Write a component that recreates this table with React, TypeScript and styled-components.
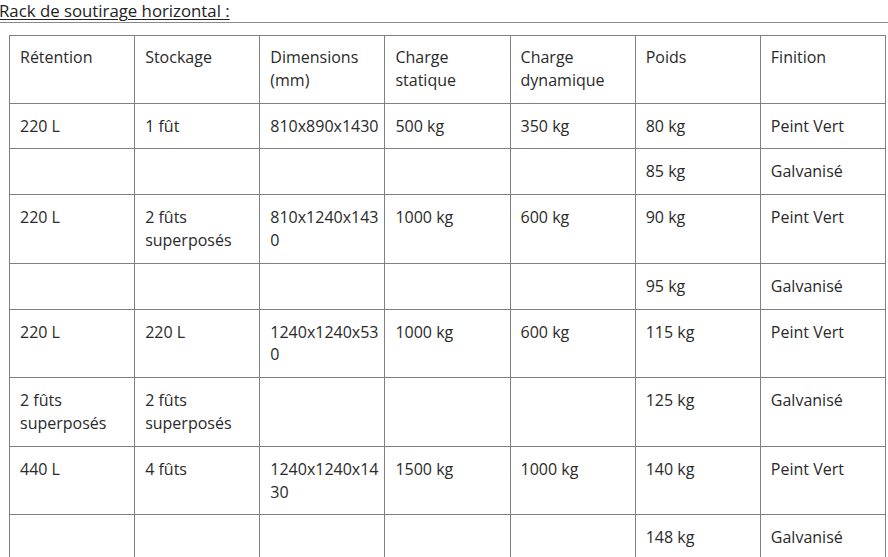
import React from "react";
import styled, { createGlobalStyle } from "styled-components";

const GlobalStyle = createGlobalStyle`
  html, body {
    margin: 0;
    padding: 0;
    background: #fff;
    overflow: hidden;
  }
  body {
    font-family: "Open Sans", "Liberation Sans", sans-serif;
    color: #2a2a2a;
  }
`;

const Page = styled.div`
  display: flex;
  flex-direction: column;
  width: 888px;
`;

const Title = styled.h3`
  margin: 0 0 0 -1px;
  padding-top: 0;
  font-size: 16.8px;
  font-weight: 400;
  line-height: 22px;
  color: #222;
  text-decoration: underline;
  text-underline-offset: 2px;
  text-decoration-thickness: 1px;
`;

const Rule = styled.hr`
  margin: 0;
  border: 0;
  border-top: 1px solid #8a8a8a;
  width: 100%;
`;

const TableWrap = styled.div`
  padding: 12px 0 0 9px;
`;

const Table = styled.table`
  width: 877px;
  table-layout: fixed;
  border-collapse: collapse;
  font-size: 16px;
  line-height: 22.8px;
`;

const Cell = styled.td<{ $head?: boolean }>`
  border: 1px solid #808080;
  padding: ${(p) => (p.$head ? "10px 10px 11px" : "11px 10px")};
  vertical-align: top;
  text-align: left;
  font-weight: 400;
  color: #2a2a2a;
`;

const Line = styled.span`
  display: block;
  white-space: nowrap;
`;

const headers = [
  "Rétention",
  "Stockage",
  "Dimensions (mm)",
  "Charge statique",
  "Charge dynamique",
  "Poids",
  "Finition",
];

// dimension strings are split where the original column wraps them
type Value = string | string[];

const rows: Value[][] = [
  ["220 L", "1 fût", ["810x890x1430"], "500 kg", "350 kg", "80 kg", "Peint Vert"],
  ["", "", "", "", "", "85 kg", "Galvanisé"],
  ["220 L", "2 fûts superposés", ["810x1240x143", "0"], "1000 kg", "600 kg", "90 kg", "Peint Vert"],
  ["", "", "", "", "", "95 kg", "Galvanisé"],
  ["220 L", "220 L", ["1240x1240x53", "0"], "1000 kg", "600 kg", "115 kg", "Peint Vert"],
  ["2 fûts superposés", "2 fûts superposés", "", "", "", "125 kg", "Galvanisé"],
  ["440 L", "4 fûts", ["1240x1240x14", "30"], "1500 kg", "1000 kg", "140 kg", "Peint Vert"],
  ["", "", "", "", "", "148 kg", "Galvanisé"],
];

function renderValue(v: Value) {
  if (Array.isArray(v)) return v.map((l, k) => <Line key={k}>{l}</Line>);
  return v;
}

export default function App() {
  return (
    <Page>
      <GlobalStyle />
      <Title>Rack de soutirage horizontal :</Title>
      <Rule />
      <TableWrap>
        <Table>
          <thead>
            <tr>
              {headers.map((h) => (
                <Cell as="th" $head key={h}>
                  {h}
                </Cell>
              ))}
            </tr>
          </thead>
          <tbody>
            {rows.map((r, i) => (
              <tr key={i}>
                {r.map((c, j) => (
                  <Cell key={j}>{renderValue(c)}</Cell>
                ))}
              </tr>
            ))}
          </tbody>
        </Table>
      </TableWrap>
    </Page>
  );
}
